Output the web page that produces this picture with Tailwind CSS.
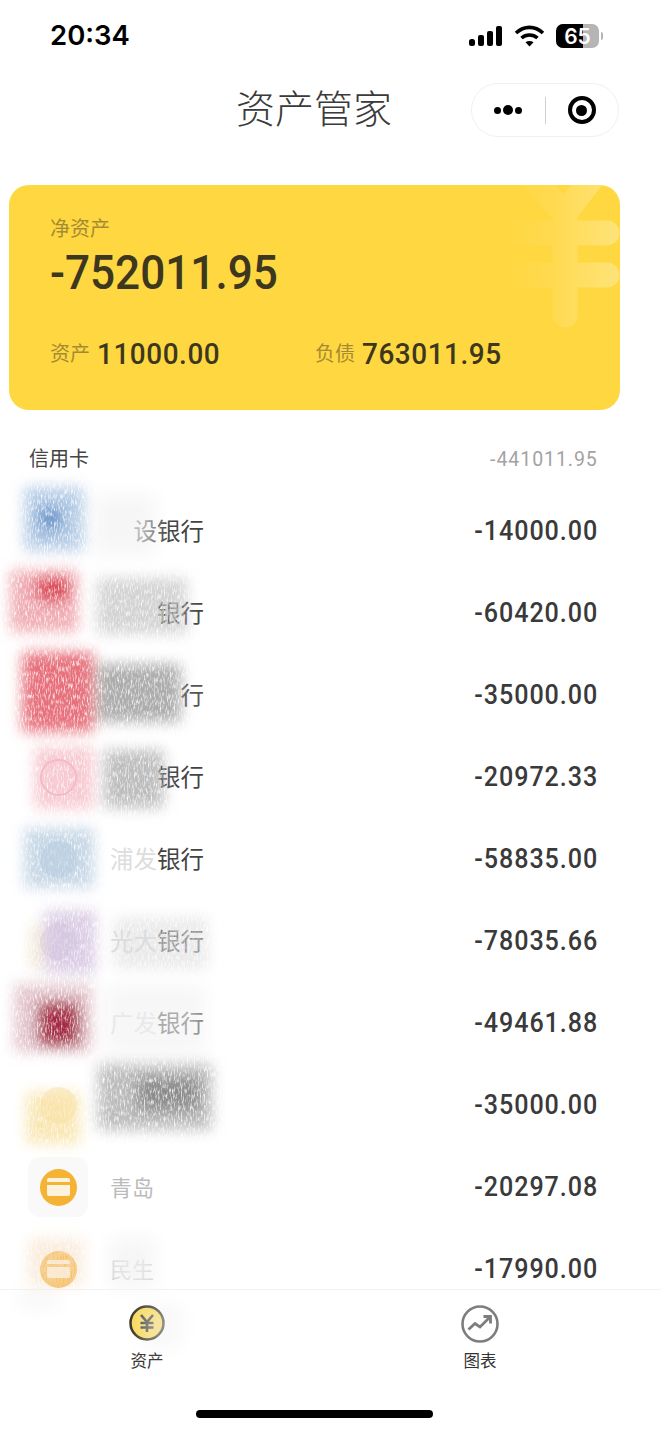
<!DOCTYPE html>
<html lang="en">
<head>
<meta charset="UTF-8">
<title>资产管家</title>
<script src="https://cdn.jsdelivr.net/npm/@tailwindcss/browser@4"></script>
</head>
<body class="bg-white">
<div class="relative flex h-[1436px] w-[661px] flex-col overflow-hidden bg-white font-['Roboto','Noto_Sans_CJK_SC',sans-serif] text-[#333]">

  <!-- status bar -->
  <div class="flex h-[72px] shrink-0 items-center justify-between pl-[50px] pr-[58px]">
    <span class="font-['Inter',sans-serif] text-[27.5px] font-semibold leading-none text-black">20:34</span>
    <div class="flex items-center gap-[11px]">
      <svg width="34" height="20" viewBox="0 0 34 20" fill="#000">
        <rect x="0" y="13" width="6" height="7" rx="2.5"/>
        <rect x="9" y="9" width="6" height="11" rx="2"/>
        <rect x="18" y="5" width="6" height="15" rx="2"/>
        <rect x="27" y="0" width="6" height="20" rx="2"/>
      </svg>
      <svg width="31" height="22" viewBox="0 0 31 22" fill="none" stroke="#000" stroke-width="3.6">
        <path d="M2 8 C10 0.5 21 0.5 29 8"/>
        <path d="M7.5 13 C12 9 19 9 23.5 13"/>
        <path d="M15.5 21.5 L11.5 17.3 C13.8 15.6 17.2 15.6 19.5 17.3 Z" fill="#000" stroke="none"/>
      </svg>
      <div class="flex items-center gap-[2px]">
        <div class="relative flex h-[24px] w-[43px] items-center justify-center overflow-hidden rounded-[7px] bg-[#b5b5b5]">
          <div class="absolute inset-y-0 left-0 w-[27px] bg-black"></div>
          <span class="relative font-['Inter',sans-serif] text-[21px] font-semibold leading-none text-white">65</span>
        </div>
        <div class="h-[8px] w-[2px] rounded-r-full bg-[#b5b5b5]"></div>
      </div>
    </div>
  </div>

  <!-- nav bar -->
  <div class="relative flex h-[76px] shrink-0 items-center justify-center">
    <span class="ml-[-33px] text-[39px] font-light leading-none text-[#3a3a3a]">资产管家</span>
    <div class="absolute right-[42px] top-[11px] flex h-[54px] w-[148px] items-center rounded-full border border-[#f0f0f0] bg-white">
      <div class="flex flex-1 items-center justify-center gap-[2px]">
        <i class="h-[7px] w-[7px] rounded-full bg-black"></i>
        <i class="h-[10px] w-[10px] rounded-full bg-black"></i>
        <i class="h-[7px] w-[7px] rounded-full bg-black"></i>
      </div>
      <div class="h-[27px] w-px bg-[#d0d0d0]"></div>
      <div class="flex flex-1 items-center justify-center">
        <div class="flex h-[28px] w-[28px] items-center justify-center rounded-full border-[4px] border-black">
          <i class="h-[11px] w-[11px] rounded-full bg-black"></i>
        </div>
      </div>
    </div>
  </div>

  <!-- summary card -->
  <div class="relative ml-[9px] mt-[37px] flex h-[225px] w-[611px] shrink-0 flex-col overflow-hidden rounded-[20px] bg-[#ffd740] pl-[41px]">
    <svg class="absolute right-0 top-0" width="115" height="150" viewBox="0 0 115 150" fill="none">
      <defs>
        <linearGradient id="wm" gradientUnits="userSpaceOnUse" x1="0" y1="0" x2="115" y2="0">
          <stop offset="0" stop-color="#fff" stop-opacity="0"/>
          <stop offset="0.4" stop-color="#fff" stop-opacity="0.08"/>
          <stop offset="1" stop-color="#fff" stop-opacity="0.3"/>
        </linearGradient>
      </defs>
      <path d="M24 -8 L60 28 L86 -6 M12 48 H102 M12 90 H102 M60 36 V130" stroke="url(#wm)" stroke-width="25" stroke-linecap="round" stroke-linejoin="round"/>
    </svg>
    <span class="mt-[32px] text-[20px] leading-[24px] text-[#a58a35]">净资产</span>
    <span class="mt-[4px] origin-left scale-x-[0.9] text-[49px] font-medium leading-[56px] text-[#3d3720]">-752011.95</span>
    <div class="mt-[35px] flex items-center">
      <div class="flex w-[265px] items-center gap-[7px]">
        <span class="text-[20px] text-[#a58a35]">资产</span>
        <span class="origin-left scale-x-[0.93] text-[30px] font-medium leading-[36px] tracking-[0.6px] text-[#3d3720]">11000.00</span>
      </div>
      <div class="flex items-center gap-[7px]">
        <span class="text-[20px] text-[#a58a35]">负债</span>
        <span class="origin-left scale-x-[0.93] text-[30px] font-medium leading-[36px] tracking-[0.6px] text-[#3d3720]">763011.95</span>
      </div>
    </div>
  </div>

  <!-- account list -->
  <div class="flex min-h-0 flex-1 flex-col overflow-hidden">
    <div class="flex h-[80px] shrink-0 items-start justify-between pl-[29px] pr-[63px] pt-[36px]">
      <span class="text-[20px] leading-[26px] text-[#444]">信用卡</span>
      <span class="origin-right scale-x-[0.93] text-[21px] leading-[26px] tracking-[1px] text-[#a3a3a3]">-441011.95</span>
    </div>

    <div class="flex h-[82px] shrink-0 items-center pl-[28px] pr-[63px]">
      <div class="h-[60px] w-[60px]"></div>
      <span class="ml-[22px] w-[94px] pt-[4px] text-right text-[23.5px] text-[#444]">设银行</span>
      <span class="ml-auto origin-right scale-x-[0.93] text-[27px] font-medium tracking-[1px] text-[#3a3a3a]">-14000.00</span>
    </div>
    <div class="flex h-[82px] shrink-0 items-center pl-[28px] pr-[63px]">
      <div class="h-[60px] w-[60px]"></div>
      <span class="ml-[22px] w-[94px] pt-[4px] text-right text-[23.5px] text-[#444]">银行</span>
      <span class="ml-auto origin-right scale-x-[0.93] text-[27px] font-medium tracking-[1px] text-[#3a3a3a]">-60420.00</span>
    </div>
    <div class="flex h-[82px] shrink-0 items-center pl-[28px] pr-[63px]">
      <div class="h-[60px] w-[60px]"></div>
      <span class="ml-[22px] w-[94px] pt-[4px] text-right text-[23.5px] text-[#555]">行</span>
      <span class="ml-auto origin-right scale-x-[0.93] text-[27px] font-medium tracking-[1px] text-[#3a3a3a]">-35000.00</span>
    </div>
    <div class="flex h-[82px] shrink-0 items-center pl-[28px] pr-[63px]">
      <div class="flex h-[60px] w-[60px] items-center justify-center"><div class="h-[37px] w-[37px] rounded-full border-2 border-[#f0b8c0]"></div></div>
      <span class="ml-[22px] w-[94px] pt-[4px] text-right text-[23.5px] text-[#444]">银行</span>
      <span class="ml-auto origin-right scale-x-[0.93] text-[27px] font-medium tracking-[1px] text-[#3a3a3a]">-20972.33</span>
    </div>
    <div class="flex h-[82px] shrink-0 items-center pl-[28px] pr-[63px]">
      <div class="flex h-[60px] w-[60px] items-center justify-center"><div class="h-[37px] w-[37px] rounded-full bg-[#a3bdd8]/40"></div></div>
      <span class="ml-[22px] w-[94px] pt-[4px] text-right text-[23.5px] text-[#444]"><span class="text-[#ddd]">浦发</span>银行</span>
      <span class="ml-auto origin-right scale-x-[0.93] text-[27px] font-medium tracking-[1px] text-[#3a3a3a]">-58835.00</span>
    </div>
    <div class="flex h-[82px] shrink-0 items-center pl-[28px] pr-[63px]">
      <div class="flex h-[60px] w-[60px] items-center justify-center"><div class="h-[37px] w-[37px] rounded-full bg-[#cdb9d5]/40"></div></div>
      <span class="ml-[22px] w-[94px] pt-[4px] text-right text-[23.5px] text-[#666]"><span class="text-[#ddd]">光大</span>银行</span>
      <span class="ml-auto origin-right scale-x-[0.93] text-[27px] font-medium tracking-[1px] text-[#3a3a3a]">-78035.66</span>
    </div>
    <div class="flex h-[82px] shrink-0 items-center pl-[28px] pr-[63px]">
      <div class="h-[60px] w-[60px]"></div>
      <span class="ml-[22px] w-[94px] pt-[4px] text-right text-[23.5px] text-[#444]"><span class="text-[#ddd]">广发</span>银行</span>
      <span class="ml-auto origin-right scale-x-[0.93] text-[27px] font-medium tracking-[1px] text-[#3a3a3a]">-49461.88</span>
    </div>
    <div class="flex h-[82px] shrink-0 items-center pl-[28px] pr-[63px]">
      <div class="flex h-[60px] w-[60px] items-center justify-center"><div class="h-[37px] w-[37px] rounded-full bg-[#f9e3ab]/50"></div></div>
      <span class="ml-[22px] w-[94px]"></span>
      <span class="ml-auto origin-right scale-x-[0.93] text-[27px] font-medium tracking-[1px] text-[#3a3a3a]">-35000.00</span>
    </div>
    <div class="flex h-[82px] shrink-0 items-center pl-[28px] pr-[63px]">
      <div class="flex h-[60px] w-[60px] items-center justify-center rounded-[12px] bg-[#f9f9f9]">
        <div class="flex h-[37px] w-[37px] items-center justify-center rounded-full bg-[#f5b335]">
          <div class="flex h-[18px] w-[23px] flex-col rounded-[2px] bg-[#fdf3dc] pt-[4px]"><i class="h-[3px] bg-[#f5b335]"></i></div>
        </div>
      </div>
      <span class="ml-[22px] pt-[2px] text-[22px] text-[#bbb]">青岛</span>
      <span class="ml-auto origin-right scale-x-[0.93] text-[27px] font-medium tracking-[1px] text-[#3a3a3a]">-20297.08</span>
    </div>
    <div class="flex h-[82px] shrink-0 items-center pl-[28px] pr-[63px]">
      <div class="flex h-[60px] w-[60px] items-center justify-center rounded-[12px]">
        <div class="flex h-[37px] w-[37px] items-center justify-center rounded-full bg-[#f7bd55]">
          <div class="flex h-[18px] w-[23px] flex-col rounded-[2px] bg-[#fdf3dc] pt-[4px]"><i class="h-[3px] bg-[#f7bd55]"></i></div>
        </div>
      </div>
      <span class="ml-[22px] pt-[2px] text-[22px] text-[#ccc]">民生</span>
      <span class="ml-auto origin-right scale-x-[0.93] text-[27px] font-medium tracking-[1px] text-[#3a3a3a]">-17990.00</span>
    </div>
  </div>

  <!-- tab bar -->
  <div class="flex h-[147px] shrink-0 flex-col border-t border-[#f3f3f3] bg-white">
    <div class="flex pt-[15px]">
      <div class="flex w-[294px] flex-col items-center">
        <svg width="36" height="36" viewBox="0 0 36 36" fill="none">
          <circle cx="18" cy="18" r="16.5" fill="#fad84f" stroke="#2f2a1a" stroke-width="2.5"/>
          <path d="M12 10 L18 17 L24 10 M18 17 V27 M11.5 18 H24.5 M11.5 22.5 H24.5" stroke="#333" stroke-width="2.6"/>
        </svg>
        <span class="mt-[10px] text-[16.5px] leading-[22px] text-[#333]">资产</span>
      </div>
      <div class="ml-[39px] flex w-[294px] flex-col items-center">
        <svg width="38" height="38" viewBox="0 0 38 38" fill="none" stroke="#7d7d7d" stroke-width="2.6">
          <circle cx="19" cy="19" r="17.5"/>
          <path d="M7.5 24.5 L14 18.5 L19 22 L29 12" stroke-width="2.8"/>
          <path d="M22.5 11.5 H29.5 V18.5" stroke-width="2.8"/>
        </svg>
        <span class="mt-[8px] text-[16.5px] leading-[22px] text-[#333]">图表</span>
      </div>
    </div>
    <div class="ml-[196px] mt-[37px] h-[8px] w-[237px] rounded-full bg-black"></div>
  </div>

  <!-- scribbled out bank names and logos -->
  <svg class="pointer-events-none absolute left-0 top-0" width="661" height="1436" viewBox="0 0 661 1436">
    <defs>
      <filter id="scrub" x="-20%" y="-20%" width="140%" height="140%">
        <feGaussianBlur in="SourceGraphic" stdDeviation="7" result="soft"/>
        <feTurbulence type="fractalNoise" baseFrequency="0.7 0.18" numOctaves="3" seed="4" result="noise"/>
        <feColorMatrix in="noise" type="matrix" values="0 0 0 0 0  0 0 0 0 0  0 0 0 0 0  2.2 0 0 0 -0.2" result="grain"/>
        <feComposite in="soft" in2="grain" operator="in"/>
      </filter>
      <filter id="wipe" x="-30%" y="-30%" width="160%" height="160%">
        <feGaussianBlur stdDeviation="9"/>
      </filter>
    </defs>
    <g filter="url(#wipe)" fill="#f2f2f2">
      <rect x="95" y="495" width="60" height="60" opacity="0.7"/>
      <rect x="105" y="985" width="100" height="70" opacity="0.6"/>
      <rect x="110" y="1238" width="45" height="50" opacity="0.7"/>
      <rect x="140" y="1305" width="42" height="42" opacity="0.5"/>
      <rect x="18" y="1292" width="40" height="16" opacity="0.6"/>
    </g>
    <g filter="url(#scrub)">
      <rect x="24" y="487" width="60" height="64" fill="#8fb0d8" opacity="0.65"/>
      <rect x="38" y="507" width="24" height="24" fill="#5f8cc4" opacity="0.8"/>
      <rect x="10" y="570" width="68" height="62" fill="#e8808c" opacity="0.65"/>
      <rect x="37" y="578" width="32" height="22" fill="#d8404f"/>
      <rect x="97" y="578" width="90" height="56" fill="#c8c8c8" opacity="0.8"/>
      <rect x="22" y="652" width="72" height="80" fill="#e4606d" opacity="0.9"/>
      <rect x="97" y="664" width="84" height="58" fill="#acacac"/>
      <rect x="34" y="747" width="60" height="62" fill="#f5bcc6" opacity="0.8"/>
      <rect x="104" y="750" width="60" height="58" fill="#bdbdbd"/>
      <rect x="24" y="828" width="70" height="60" fill="#b3c9de" opacity="0.75"/>
      <rect x="44" y="910" width="52" height="64" fill="#d2c0df" opacity="0.8"/>
      <rect x="31" y="924" width="10" height="46" fill="#ecdcc0" opacity="0.8"/>
      <rect x="114" y="917" width="94" height="52" fill="#dcdcdc" opacity="0.6"/>
      <rect x="14" y="984" width="78" height="68" fill="#dcb6bf" opacity="0.8"/>
      <rect x="38" y="1002" width="42" height="44" fill="#a52c44"/>
      <rect x="26" y="1092" width="54" height="52" fill="#f8e0a0" opacity="0.8"/>
      <rect x="98" y="1064" width="114" height="66" fill="#bcbcbc"/>
      <rect x="137" y="1077" width="64" height="34" fill="#8c8c8c"/>
      <rect x="28" y="1238" width="56" height="48" fill="#f6dfc4" opacity="0.6"/>
    </g>
  </svg>
</div>
</body>
</html>
